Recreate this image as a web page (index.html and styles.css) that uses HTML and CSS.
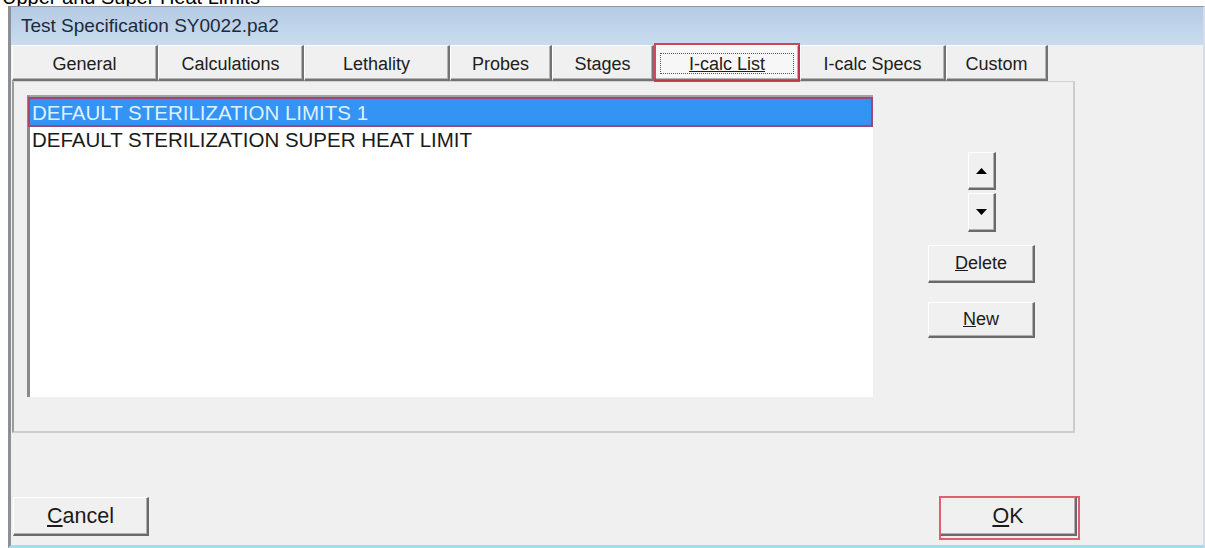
FILE: index.html
```html
<!DOCTYPE html>
<html>
<head>
<meta charset="utf-8">
<title>Test Specification SY0022.pa2</title>
<link rel="stylesheet" href="styles.css">
</head>
<body>
<div class="caption-strip"><span>Upper and Super Heat Limits</span></div>
<div class="window">
  <div class="titlebar">Test Specification SY0022.pa2</div>
  <div class="client">
    <div class="tabs">
      <div class="tab wide">General</div>
      <div class="tab wide">Calculations</div>
      <div class="tab wide">Lethality</div>
      <div class="tab narrow">Probes</div>
      <div class="tab narrow">Stages</div>
      <div class="tab wide active"><span class="focus">I-calc List</span></div>
      <div class="tab wide">I-calc Specs</div>
      <div class="tab narrow">Custom</div>
    </div>
    <div class="panel">
      <div class="listbox">
        <div class="item selected">DEFAULT STERILIZATION LIMITS 1</div>
        <div class="item">DEFAULT STERILIZATION SUPER HEAT LIMIT</div>
      </div>
      <div class="side">
        <button class="btn arrow up"><svg width="11" height="6" viewBox="0 0 11 6"><polygon points="5.5,0 11,6 0,6" fill="#000"/></svg></button>
        <button class="btn arrow down"><svg width="11" height="6" viewBox="0 0 11 6"><polygon points="0,0 11,0 5.5,6" fill="#000"/></svg></button>
        <button class="btn small delete"><u>D</u>elete</button>
        <button class="btn small new"><u>N</u>ew</button>
      </div>
    </div>
    <div class="footer">
      <button class="btn large cancel"><u>C</u>ancel</button>
      <button class="btn large ok marked"><u>O</u>K</button>
    </div>
  </div>
</div>
</body>
</html>
```

FILE: styles.css
```css
* {
  box-sizing: border-box;
}

html, body {
  margin: 0;
  padding: 0;
  background: #ffffff;
  width: 1205px;
  height: 548px;
  overflow: hidden;
  font-family: "Liberation Sans", Arial, sans-serif;
}

/* heading text of the page above the dialog, mostly scrolled out of view */
.caption-strip {
  height: 6px;
  overflow: hidden;
}

.caption-strip span {
  display: block;
  margin-top: -13px;
  padding-left: 2px;
  font-size: 20px;
  line-height: 20px;
  color: #000;
  white-space: nowrap;
}

/* dialog window */
.window {
  margin-left: 8px;
  width: 1197px;
  height: 542px;
  border-top: 1px solid #8d99a6;
  border-left: 3px solid #8c9096;
  border-right: 2px solid #d6dde6;
  border-bottom: 3px solid #a6dce9;
  display: flex;
  flex-direction: column;
  background: #f0f0f0;
}

.titlebar {
  height: 38px;
  line-height: 38px;
  padding-left: 10px;
  font-size: 19px;
  color: #1c2a3a;
  background: linear-gradient(#b5cbe3, #c3d7ec 70%, #c9dcef);
  white-space: nowrap;
}

.client {
  flex: 1;
  background: #f0f0f0;
  display: flex;
  flex-direction: column;
}

/* tab strip */
.tabs {
  display: flex;
  height: 36px;
  margin-left: 1px;
}

.tab {
  height: 36px;
  background: #f0f0f0;
  border-top: 1px solid #ffffff;
  border-left: 1px solid #ffffff;
  border-right: 2px solid #737373;
  border-bottom: 2px solid #737373;
  box-shadow: inset -1px -1px 0 #b4b4b4;
  font-size: 18px;
  color: #202020;
  text-align: center;
  line-height: 32px;
  padding-top: 2px;
  white-space: nowrap;
}

.tab.wide {
  width: 146px;
}

.tab.narrow {
  width: 102px;
}

.tab.active {
  position: relative;
  background: #f7f7f7;
  display: flex;
  align-items: stretch;
  padding: 7px 4px 5px 5px;
  line-height: 20px;
}

.tab.active::after {
  content: "";
  position: absolute;
  left: -1px;
  right: -2px;
  top: -3px;
  bottom: -3px;
  border: 2px solid rgba(205, 45, 62, 0.85);
}

.tab .focus {
  flex: 1;
  border: 1px dotted #555;
  text-decoration: underline;
  line-height: 20px;
}

/* tab page */
.panel {
  margin-left: 1px;
  width: 1063px;
  height: 352px;
  border-top: 1px solid #d2d2d2;
  border-left: 2px solid #9c9c9c;
  border-right: 2px solid #cdcdcd;
  border-bottom: 2px solid #cdcdcd;
  padding: 13px 0 0 13px;
  display: flex;
  align-items: flex-start;
  background: #f0f0f0;
}

.listbox {
  width: 846px;
  height: 302px;
  background: #ffffff;
  border-left: 3px solid #8a8a8a;
  border-top: 2px solid #a2a2a2;
  font-size: 20.5px;
  color: #1a1a1a;
}

.item {
  padding-left: 2px;
  height: 26px;
  line-height: 26px;
  white-space: nowrap;
}

.item.selected {
  position: relative;
  height: 30px;
  padding-top: 6px;
  line-height: 20px;
  background: #3394f5;
  color: #dff0ff;
}

.item.selected::after {
  content: "";
  position: absolute;
  left: -2px;
  right: 0;
  top: 0;
  bottom: 0;
  border: 2px solid rgba(200, 40, 70, 0.7);
}

.side {
  width: 107px;
  margin-left: 55px;
  margin-top: 57px;
  display: flex;
  flex-direction: column;
  align-items: center;
}

/* classic 3D push buttons */
.btn {
  font-family: "Liberation Sans", Arial, sans-serif;
  background: #f0f0f0;
  color: #1a1a1a;
  border-top: 1px solid #ffffff;
  border-left: 1px solid #ffffff;
  border-right: 2px solid #6a6a6a;
  border-bottom: 2px solid #6a6a6a;
  box-shadow: inset -1px -1px 0 #b0b0b0;
  padding: 0;
  margin: 0;
  display: flex;
  align-items: center;
  justify-content: center;
}

.btn.arrow {
  width: 28px;
  height: 38px;
}

.btn.arrow.down {
  margin-top: 3px;
  height: 39px;
}

.btn.small {
  width: 107px;
  font-size: 18px;
}

.btn.delete {
  height: 38px;
  margin-top: 13px;
}

.btn.new {
  height: 36px;
  margin-top: 19px;
}

.footer {
  display: flex;
  margin-top: 64px;
}

.btn.large {
  height: 39px;
  font-size: 21.5px;
}

.btn.cancel {
  width: 136px;
  margin-left: 2px;
}

.btn.ok {
  width: 137px;
  margin-left: auto;
  margin-right: 126px;
}

.btn.marked {
  position: relative;
}

.btn.marked::after {
  content: "";
  position: absolute;
  left: -2px;
  right: -5px;
  top: -2px;
  bottom: -6px;
  border: 2px solid rgba(215, 60, 75, 0.8);
}
```
